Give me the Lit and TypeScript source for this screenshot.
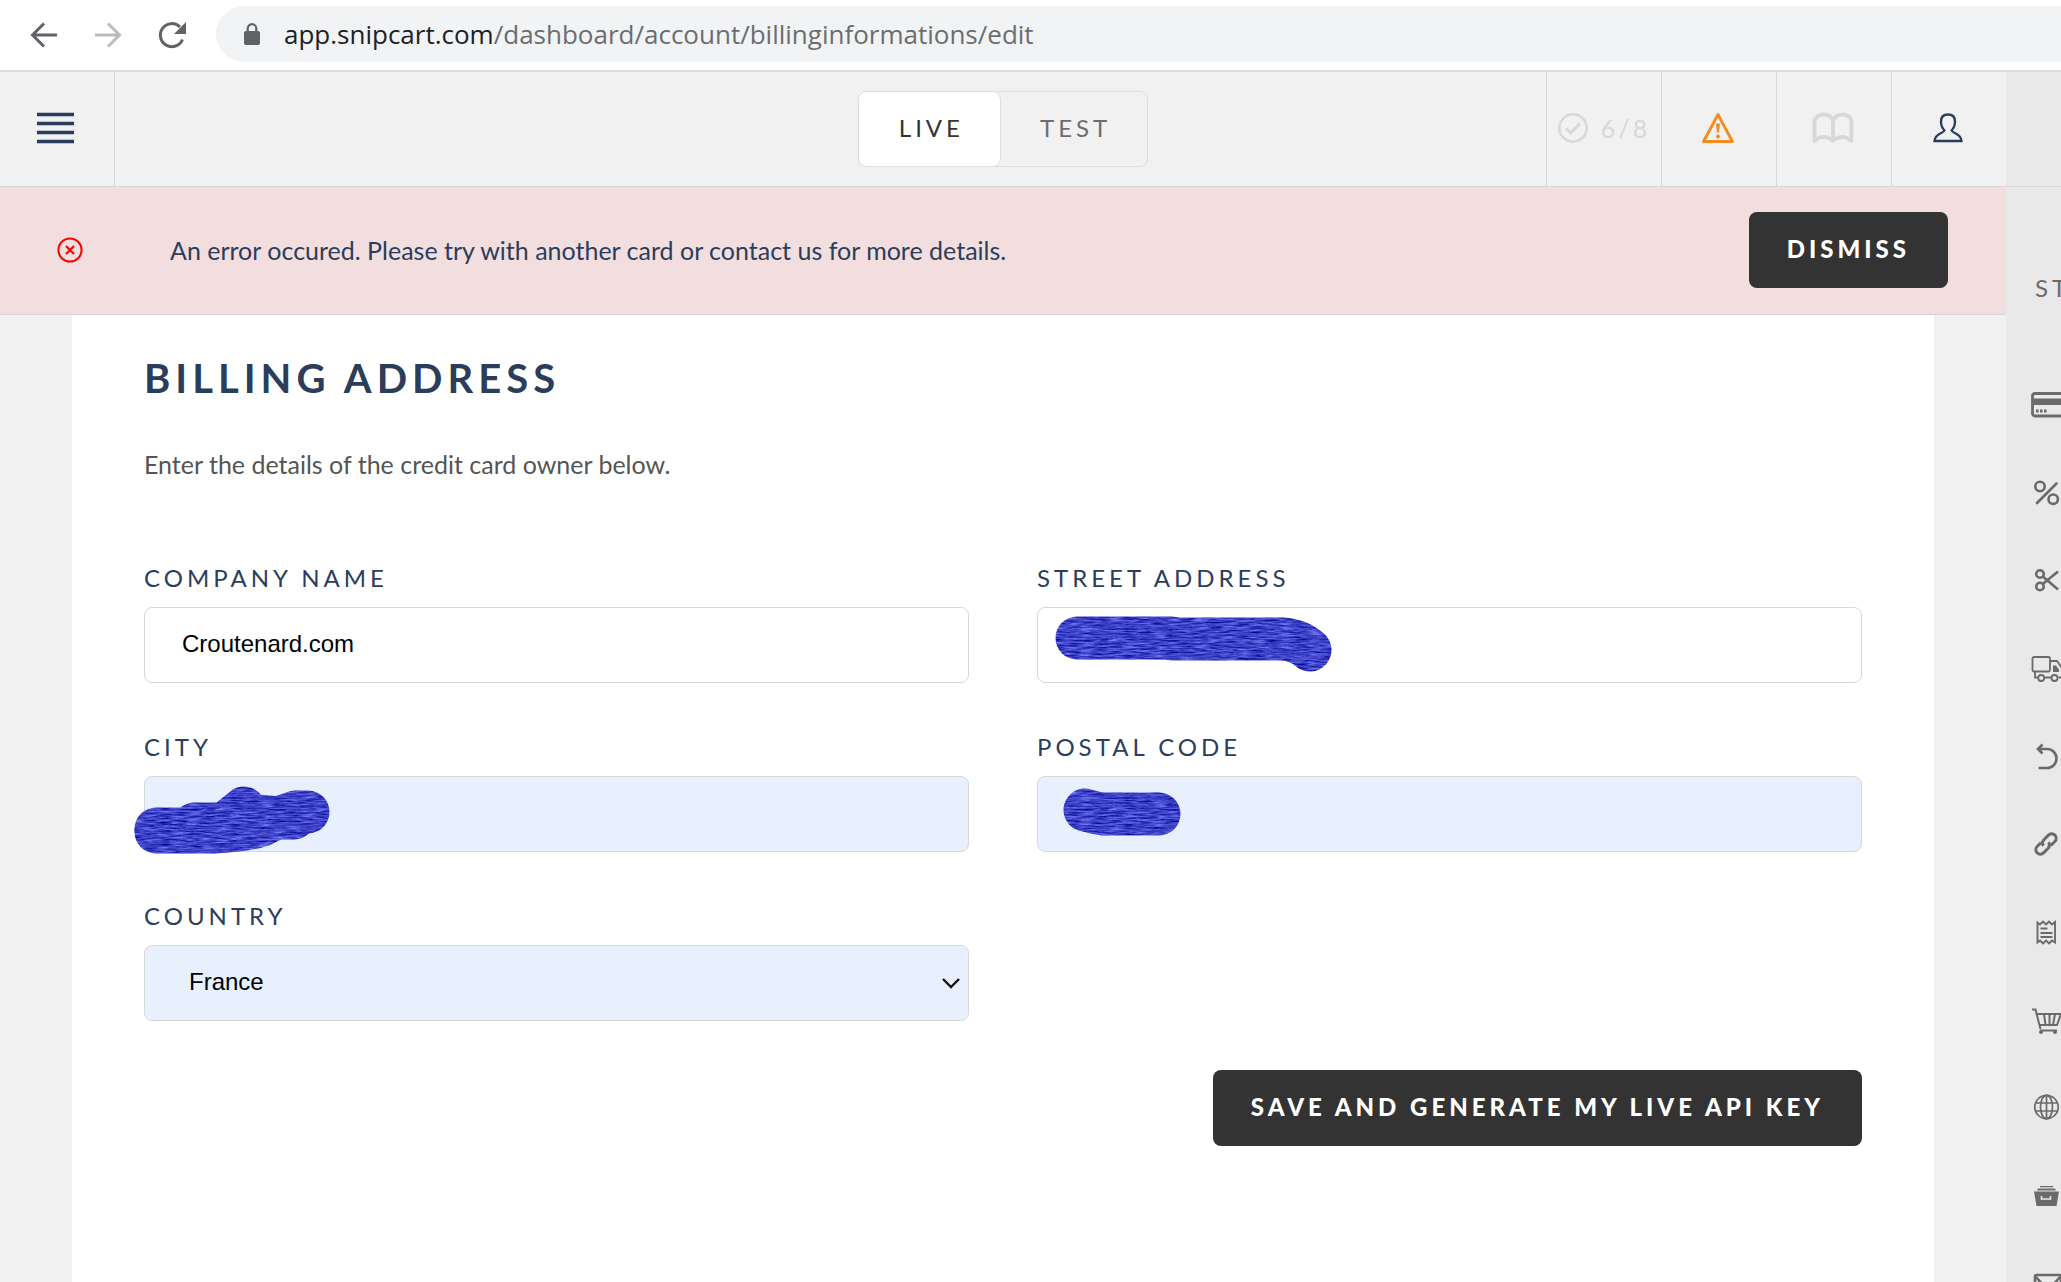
import { LitElement, html, css, svg, nothing } from "lit";
import { customElement, property, state } from "lit/decorators.js";

const sideIcons = [
  {
    label: "Payments",
    art: svg`<rect x="1.5" y="4.500" width="36" height="22.500" rx="2.500" stroke-width="2.800"/><path class="solid" d="M1 9.500h37v6.500H1z"/><path d="M5 22h2.600M9 22h2.600M13 22h2.600" stroke-width="3"/>`,
  },
  {
    label: "Discounts",
    art: svg`<circle cx="9" cy="9.500" r="4.700"/><circle cx="22.200" cy="22.200" r="4.700"/><path d="M25.500 6.500 6 26" stroke-linecap="round"/>`,
  },
  {
    label: "Abandoned",
    art: svg`<circle cx="9" cy="9" r="3.800"/><circle cx="9" cy="21.500" r="3.800"/><path d="M27 6.500 11.800 19M27 24.500 11.800 11.500"/>`,
  },
  {
    label: "Shipping",
    art: svg`<g stroke-width="1.800"><rect x="1.500" y="4" width="17.500" height="14.500" rx="1.500"/><path d="M4 19v5.500h3M13.500 24.500h6.500M19.500 8h6.500l5 7v9.500h-3.500"/><circle cx="10.200" cy="25" r="3"/><circle cx="23.500" cy="25" r="3"/></g><path class="solid" d="M22 12.500h3l3 4v2.500h-6z"/>`,
  },
  {
    label: "Refunds",
    art: svg`<path d="M11.500 3.500 7 8l4.500 4.500M7 8h9a8.700 8.700 0 0 1 0 19H7.500"/>`,
  },
  {
    label: "Links",
    art: svg`<g transform="rotate(-45 15 15)" stroke-width="3"><path d="M12.500 10.500H7a4.500 4.500 0 0 0 0 9h6.500a4.500 4.500 0 0 0 4.500-4"/><path d="M17.500 19.500h5.500a4.500 4.500 0 0 0 0-9h-6.500a4.500 4.500 0 0 0-4.500 4"/></g>`,
  },
  {
    label: "Invoices",
    art: svg`<path d="M6.500 5.500 9 7.500l3-3 3 3 3-3 3 3 3-2.500v20.500l-3-2-3 3-3-3-3 3-3-3-2.500 2z" stroke-width="1.900"/><path d="M9.500 11.500h7M9.500 16h12M9.500 20h12" stroke-width="2.200"/>`,
  },
  {
    label: "Carts",
    art: svg`<path d="M1 4.500h3.500L9.500 24M6 9h24l-4 11H9M13 9l1.500 11M18.500 9v11M24 9l-2 11M9 25.500h17" stroke-width="2"/><circle class="solid" cx="10" cy="27" r="2"/><circle class="solid" cx="24" cy="27" r="2"/>`,
  },
  {
    label: "Domains",
    art: svg`<g stroke-width="1.700"><circle cx="15.500" cy="14" r="11.700"/><ellipse cx="15.500" cy="14" rx="6" ry="11.700"/><path d="M15.500 2.500v23M5 10h21M5 18h21"/></g>`,
  },
  {
    label: "Archive",
    art: svg`<path class="solid" d="M9 5h13v1.300H9zM7 7.500h17l1 2H6zM3 10.500h25L25.500 25H5.500z"/><path class="cut" d="M10.500 15v3h9v-3"/>`,
  },
  {
    label: "Messages",
    art: svg`<rect x="4" y="6" width="26" height="22" rx="1.500"/><path d="m5 8 7 8h10l7-8"/>`,
  },
];

@customElement("side-rail")
export class SideRail extends LitElement {
  static styles = css`
    :host {
      display: block;
      width: 55px;
      overflow: hidden;
      background: #e9e9e9;
      color: #6a6a6a;
      font-family: Lato, "Liberation Sans", sans-serif;
    }
    .head {
      height: 114px;
      border-bottom: 1px solid #d8d8d8;
    }
    .title {
      margin: 0;
      padding: 85px 0 0 29px;
      font-size: 24px;
      font-weight: 400;
      line-height: 32px;
      letter-spacing: 4px;
      white-space: nowrap;
    }
    .links {
      display: flex;
      flex-direction: column;
      margin: 0;
      padding: 57px 0 0;
      list-style: none;
    }
    .link {
      display: flex;
      align-items: center;
      height: 88px;
      padding-left: 25px;
      color: inherit;
    }
    .icon {
      flex: none;
      width: 40px;
      height: 32px;
      fill: none;
      stroke: currentColor;
      stroke-width: 2.6;
    }
    .solid {
      fill: currentColor;
      stroke: none;
    }
    .cut {
      stroke: #e9e9e9;
      stroke-width: 1.6;
    }
  `;

  render() {
    return html`
      <div class="head"></div>
      <nav>
        <h2 class="title">ST</h2>
        <ul class="links">
          ${sideIcons.map(
            (item) => html`<li>
              <a class="link" href="#" aria-label=${item.label}>
                <svg class="icon" viewBox="0 0 40 32" aria-hidden="true">${item.art}</svg>
              </a>
            </li>`
          )}
        </ul>
      </nav>
    `;
  }
}

@customElement("ink-mark")
export class InkMark extends LitElement {
  @property({ attribute: false }) strokes: string[] = [];

  static styles = css`
    :host {
      position: absolute;
      left: 0;
      top: 0;
      pointer-events: none;
    }
    .ink {
      display: block;
      width: 320px;
      height: 90px;
      overflow: visible;
      fill: none;
      stroke: #3a40cc;
      stroke-width: 43;
      stroke-linecap: round;
      stroke-linejoin: round;
    }
  `;

  render() {
    return html`<svg class="ink" viewBox="0 0 320 90" aria-hidden="true">
      <filter id="grain" filterUnits="userSpaceOnUse" x="-20" y="0" width="340" height="90" color-interpolation-filters="sRGB">
        <feTurbulence type="fractalNoise" baseFrequency="0.07 0.6" numOctaves="4" seed="7" />
        <feColorMatrix values="0.7 0 0 0 -0.11  0.7 0 0 0 -0.09  0.6 0 0 0 0.48  0 0 0 0 1" />
        <feComposite in2="SourceAlpha" operator="in" />
      </filter>
      <g filter="url(#grain)">
        ${this.strokes.map((d) => svg`<path d=${d}></path>`)}
      </g>
    </svg>`;
  }
}

interface Field {
  id: string;
  label: string;
  value: string;
  filled?: boolean;
  strokes?: string[];
  options?: string[];
}

const fields: Field[] = [
  { id: "company", label: "COMPANY NAME", value: "Croutenard.com" },
  {
    id: "street",
    label: "STREET ADDRESS",
    value: "",
    strokes: ["M40 31H135", "M135 32H245Q262 33 273 43"],
  },
  {
    id: "city",
    label: "CITY",
    value: "",
    filled: true,
    strokes: ["M12 53H46", "M12 56H70Q100 55 118 49L132 42 150 42", "M50 48H80L100 32 104 39 134 42 152 36H164"],
  },
  {
    id: "postal",
    label: "POSTAL CODE",
    value: "",
    filled: true,
    strokes: ["M48 34Q58 37 66 38H122"],
  },
  { id: "country", label: "COUNTRY", value: "France", filled: true, options: ["France"] },
];

@customElement("billing-form")
export class BillingForm extends LitElement {
  static styles = css`
    :host {
      display: block;
      flex: 1;
      margin: 0 72px;
      padding: 39px 72px;
      background: #fff;
      color: #2b3d5b;
    }
    .title {
      margin: 0;
      font-size: 40px;
      line-height: 48px;
      font-weight: 700;
      letter-spacing: 5px;
    }
    .lead {
      margin: 46px 0 82px;
      color: #555;
      font-size: 25px;
      line-height: 32px;
    }
    .grid {
      display: grid;
      grid-template-columns: 1fr 1fr;
      gap: 48px 68px;
    }
    .field {
      display: flex;
      flex-direction: column;
      gap: 13px;
    }
    .label {
      font-size: 24px;
      line-height: 32px;
      letter-spacing: 4px;
    }
    .box {
      position: relative;
      display: grid;
    }
    .control {
      box-sizing: border-box;
      width: 100%;
      height: 76px;
      margin: 0;
      padding: 0 37px 2px;
      border: 1px solid #d8d8d8;
      border-radius: 8px;
      background: #fff;
      color: #000;
      font: 24px/32px "Liberation Sans", Arial, sans-serif;
      appearance: none;
    }
    .filled {
      background: #e8f0fe;
    }
    .select {
      padding-left: 44px;
    }
    .chevron {
      position: absolute;
      right: 8px;
      top: 32px;
      width: 20px;
      height: 12px;
      fill: none;
      stroke: #111;
      stroke-width: 2.4;
      pointer-events: none;
    }
    .actions {
      display: flex;
      justify-content: flex-end;
      margin-top: 49px;
    }
    .save {
      height: 76px;
      padding: 0 38px 2px;
      border: 0;
      border-radius: 8px;
      background: #333;
      color: #fff;
      font: 900 24px/32px Lato, "Liberation Sans", sans-serif;
      letter-spacing: 4px;
    }
  `;

  private control(f: Field) {
    if (f.options) {
      return html`<select id=${f.id} class="control select filled">
          ${f.options.map((o) => html`<option>${o}</option>`)}
        </select>
        <svg class="chevron" viewBox="0 0 20 12" aria-hidden="true"><path d="m2 2 8 8 8-8" /></svg>`;
    }
    return html`<input id=${f.id} class="control ${f.filled ? "filled" : ""}" type="text" .value=${f.value} />`;
  }

  render() {
    return html`
      <form @submit=${(e: Event) => e.preventDefault()}>
        <h1 class="title">BILLING ADDRESS</h1>
        <p class="lead">Enter the details of the credit card owner below.</p>
        <div class="grid">
          ${fields.map(
            (f) => html`<div class="field">
              <label class="label" for=${f.id}>${f.label}</label>
              <div class="box">
                ${this.control(f)}
                ${f.strokes ? html`<ink-mark .strokes=${f.strokes}></ink-mark>` : nothing}
              </div>
            </div>`
          )}
        </div>
        <div class="actions">
          <button class="save" type="submit">SAVE AND GENERATE MY LIVE API KEY</button>
        </div>
      </form>
    `;
  }
}

@customElement("app-root")
export class AppRoot extends LitElement {
  @state() private mode = "LIVE";
  @state() private alertOpen = true;

  static styles = css`
    :host {
      display: flex;
      flex-direction: column;
      height: 100vh;
      overflow: hidden;
      background: #f1f1f1;
      font-family: Lato, "Liberation Sans", sans-serif;
      color: #2b3d5b;
    }
    button {
      margin: 0;
      border: 0;
      background: none;
      font: inherit;
      color: inherit;
    }
    svg {
      display: block;
      fill: none;
      stroke: currentColor;
    }
    .browser {
      flex: none;
      display: flex;
      align-items: center;
      height: 70px;
      background: #fff;
      border-bottom: 2px solid #dcdcdc;
      color: #5f6368;
    }
    .tools {
      display: flex;
      gap: 32px;
      padding: 0 28px;
    }
    .tool {
      width: 32px;
      height: 32px;
      padding: 0;
    }
    .muted {
      color: #babcbe;
    }
    .address {
      flex: 1;
      display: flex;
      align-items: center;
      gap: 22px;
      height: 56px;
      margin-bottom: 2px;
      padding-left: 26px;
      border-radius: 28px 0 0 28px;
      background: #f1f3f4;
      font: 26px/36px "Open Sans", "Noto Sans", sans-serif;
      color: #6a6d71;
    }
    .lock {
      width: 20px;
      height: 24px;
      color: #5f6368;
    }
    .host {
      color: #202124;
    }
    .body {
      flex: 1;
      display: flex;
      min-height: 0;
    }
    .main {
      flex: 1;
      display: flex;
      flex-direction: column;
      min-width: 0;
    }
    .header {
      flex: none;
      display: flex;
      align-items: stretch;
      height: 114px;
      border-bottom: 1px solid #d8d8d8;
    }
    .side {
      flex: 1;
      display: flex;
    }
    .end {
      justify-content: flex-end;
    }
    .cell {
      display: flex;
      align-items: center;
      justify-content: center;
      width: 115px;
      padding: 0 2px 2px 0;
      border-left: 1px solid #d8d8d8;
    }
    .menu {
      border-left: 0;
      border-right: 1px solid #d8d8d8;
    }
    .faint {
      color: #d8d8d8;
      font-size: 25px;
      letter-spacing: 3px;
    }
    .progress {
      gap: 13px;
      padding-right: 0;
    }
    .warn {
      color: #f58a1f;
    }
    .toggle {
      align-self: center;
      display: flex;
      height: 74px;
      border: 1px solid #dedede;
      border-radius: 8px;
    }
    .mode {
      padding: 0 36px 2px 40px;
      border-radius: 8px;
      color: #6d6d6d;
      font-size: 24px;
      line-height: 32px;
      letter-spacing: 4px;
    }
    .on {
      background: #fff;
      color: #333;
      box-shadow: 1px 0 0 #dedede;
    }
    .alert {
      flex: none;
      display: flex;
      align-items: center;
      box-sizing: border-box;
      height: 128px;
      padding: 0 58px 2px 57px;
      background: #f2dede;
      border-bottom: 1px solid #d8d4d4;
    }
    .cross {
      color: #f00;
    }
    .message {
      flex: 1;
      margin: 0 0 0 87px;
      font-size: 25px;
      line-height: 32px;
    }
    .dismiss {
      height: 76px;
      padding: 0 38px 2px;
      border-radius: 8px;
      background: #333;
      color: #fff;
      font-weight: 900;
      font-size: 24px;
      line-height: 32px;
      letter-spacing: 4px;
    }
  `;

  render() {
    return html`
      <div class="browser">
        <div class="tools">
          <button class="tool" aria-label="Back">
            <svg viewBox="0 0 32 32" width="32" height="32" stroke-width="3"><path d="M29 16H5M16 4.500 4.500 16 16 27.500" /></svg>
          </button>
          <button class="tool muted" aria-label="Forward">
            <svg viewBox="0 0 32 32" width="32" height="32" stroke-width="3"><path d="M3 16h24M16 4.500 27.500 16 16 27.500" /></svg>
          </button>
          <button class="tool" aria-label="Reload">
            <svg viewBox="0 0 32 32" width="32" height="32" stroke-width="3"><path d="M26.500 20.500a11.500 11.500 0 1 1-2.500-12.500" /><path d="M30 3v12H18z" fill="currentColor" stroke="none" /></svg>
          </button>
        </div>
        <div class="address">
          <svg class="lock" viewBox="0 0 20 24"><rect x="2" y="9" width="16" height="14" rx="2" fill="currentColor" stroke="none" /><path d="M5.700 10V6.500a4.300 4.300 0 0 1 8.600 0V10" stroke-width="2.200" /></svg>
          <span><span class="host">app.snipcart.com</span>/dashboard/account/billinginformations/edit</span>
        </div>
      </div>
      <div class="body">
        <main class="main">
          <header class="header">
            <div class="side">
              <button class="cell menu" aria-label="Menu">
                <svg viewBox="0 0 38 32" width="38" height="32" stroke-width="3.600"><path d="M0 2.500h37M0 11.500h37M0 20.500h37M0 29.500h37" /></svg>
              </button>
            </div>
            <div class="toggle">
              ${["LIVE", "TEST"].map(
                (m) => html`<button class="mode ${this.mode === m ? "on" : ""}" @click=${() => (this.mode = m)}>${m}</button>`
              )}
            </div>
            <div class="side end">
              <button class="cell faint progress">
                <svg viewBox="0 0 30 30" width="30" height="30" stroke-width="2.600"><circle cx="15" cy="15" r="13.700" /><path d="m8 15.500 4.500 4.500L22 10.500" stroke-width="3" /></svg>
                <span>6/8</span>
              </button>
              <button class="cell warn" aria-label="Warnings">
                <svg viewBox="0 0 34 32" width="34" height="32" stroke-width="2.800" stroke-linejoin="round"><path d="M17 2.500 2.500 29.500h29z" /><path d="M15 11.500h4L18 20.500h-2z" fill="currentColor" stroke="none" /><circle cx="17" cy="24.500" r="2" fill="currentColor" stroke="none" /></svg>
              </button>
              <button class="cell faint" aria-label="Documentation">
                <svg viewBox="0 0 42 32" width="42" height="32" stroke-width="3.800" stroke-linejoin="round"><path d="M21 8.500C19 4 15.500 2.500 11.500 2.500S4 5 2.500 8.500V29c3-3 6-4 9-4s7 1.500 9.500 4c2.500-2.500 6-4 9.500-4s6 1 9 4V8.500C38 5 34.500 2.500 30.500 2.500S23 4 21 8.500zV29" /></svg>
              </button>
              <button class="cell" aria-label="Account">
                <svg viewBox="0 0 30 30" width="30" height="30" stroke-width="2.300"><path d="M15 1.500c4.500 0 7 2.500 7 7 0 3.500-1 6.500-3.500 9 1 3 9.500 2.500 10 10.500h-27C2 20 10.500 20.500 11.500 17.500 9 15 8 12 8 8.500c0-4.500 2.500-7 7-7z" /></svg>
              </button>
            </div>
          </header>
          ${this.alertOpen
            ? html`<div class="alert" role="alert">
                <svg class="cross" viewBox="0 0 26 26" width="26" height="26" stroke-width="2"><circle cx="13" cy="13" r="11.600" /><path d="m9 9 8 8M17 9l-8 8" stroke-width="2.200" /></svg>
                <p class="message">An error occured. Please try with another card or contact us for more details.</p>
                <button class="dismiss" @click=${() => (this.alertOpen = false)}>DISMISS</button>
              </div>`
            : nothing}
          <billing-form></billing-form>
        </main>
        <side-rail></side-rail>
      </div>
    `;
  }
}
